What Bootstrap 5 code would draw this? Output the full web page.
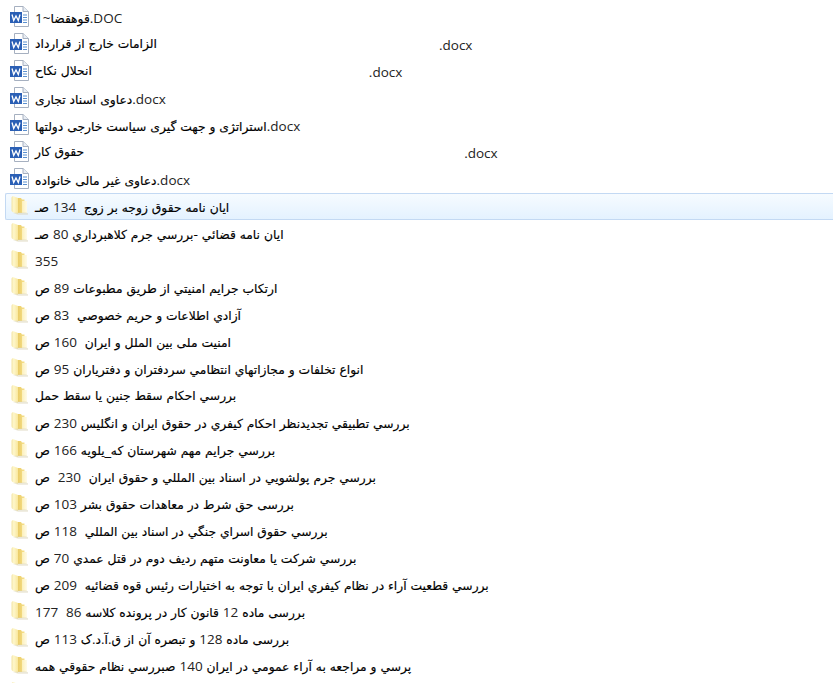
<!DOCTYPE html>
<html lang="fa">
<head>
  <meta charset="UTF-8" />
  <title>Explorer</title>
  <link rel="stylesheet" href="https://cdn.jsdelivr.net/npm/bootstrap@5.3.0/dist/css/bootstrap.min.css">
  <style>
    html, body { height: 683px; overflow: hidden; background: #fff; }
    body { font-family: "DejaVu Sans", sans-serif; font-size: 12.3px; color: #000; }
    .file-list { padding: 4px 0 0 5px; }
    .file-row { height: 27px; padding-left: 4px; gap: 6px; border: 1px solid transparent; border-right: 0; white-space: pre; direction: ltr; -webkit-text-stroke: .15px #000; }
    .file-row.is-selected { border-color: #c3d9f3; border-radius: 2px 0 0 2px; background: linear-gradient(#f6fbff, #e4f2ff); }
    .file-icon { flex: none; width: 19px; height: 21px; margin-bottom: 3px; filter: blur(.4px); }
    .file-label { padding-top: 2px; }
    .latin-run { font-family: "Open Sans", sans-serif; font-size: 13.5px; color: #222; -webkit-text-stroke: 0; }
    .pad-282 { margin-left: 282px; }
    .pad-277 { margin-left: 277px; }
    .pad-380 { margin-left: 380px; }
  </style>
</head>
<body>
  <svg class="position-absolute" width="0" height="0">
    <defs>
      <linearGradient id="leaf" x1="0" x2="1" y1="0" y2="0">
        <stop offset="0" stop-color="#f3e4a4"/><stop offset=".35" stop-color="#fef7cc"/><stop offset="1" stop-color="#f9e79c"/>
      </linearGradient>
      <linearGradient id="back" x1="0" x2="1" y1="0" y2="0">
        <stop offset="0" stop-color="#e6c65c"/><stop offset="1" stop-color="#f6e08c"/>
      </linearGradient>
      <linearGradient id="front" x1="0" x2="1" y1="0" y2="0">
        <stop offset="0" stop-color="#fcf0ba"/><stop offset="1" stop-color="#fffbe8"/>
      </linearGradient>
      <symbol id="doc" viewBox="0 0 19 21">
        <path d="M4.500.5H13L18.500 5.500V20.500H4.500z" fill="#fff" stroke="#a6b0c0"/>
        <path d="M13 .5V5.500h5.500" fill="#e8edf4" stroke="#a6b0c0"/>
        <path d="M13 9h4M13 11.500h4M13 14h4M13 16.500h4" stroke="#5b90cf"/>
        <rect x="0" y="6" width="12" height="11" fill="#2a5fb5"/>
        <path d="M2 8.500l1.700 6 2.300-4.500 2.300 4.500 1.700-6" fill="none" stroke="#fff" stroke-width="1.300"/>
      </symbol>
      <symbol id="folder" viewBox="0 0 19 21">
        <path d="M6 3h5l1 1.500h2.500V18H6z" fill="url(#back)"/>
        <path d="M12 6h5v12h-5z" fill="url(#front)"/>
        <path d="M1.500 3C1.500 1.500 2.500 1 3.500 1.300L8 3V19L3.500 17.500C2.200 17 1.500 16.200 1.500 15z" fill="url(#leaf)"/>
        <path d="M3 18l5 1.800h10v-1.600L16 17.500H8z" fill="#d8d2b4" opacity=".5"/>
      </symbol>
    </defs>
  </svg>

  <main class="file-list d-flex flex-column" id="files"></main>

  <script>
    // name, icon, extra class for the gap before the extension
    const rows = [
      ["قوهقضا~1.DOC", "doc"],
      ["الزامات خارج از قرارداد", "doc", "pad-282", ".docx"],
      ["انحلال نكاح", "doc", "pad-277", ".docx"],
      ["دعاوی اسناد تجاری.docx", "doc"],
      ["استراتژی و جهت گیری سیاست خارجی دولتها.docx", "doc"],
      ["حقوق كار", "doc", "pad-380", ".docx"],
      ["دعاوی غیر مالی خانواده.docx", "doc"],
      ["ايان نامه حقوق زوجه بر زوج  134 صـ", "folder"],
      ["ايان نامه قضائي -بررسي جرم كلاهبرداري 80 صـ", "folder"],
      ["355", "folder"],
      ["ارتكاب جرايم امنيتي از طريق مطبوعات 89 ص", "folder"],
      ["آزادي اطلاعات و حريم خصوصي  83 ص", "folder"],
      ["امنيت ملی بين الملل و ايران  160 ص", "folder"],
      ["انواع تخلفات و مجازاتهاي انتظامي سردفتران و دفترياران 95 ص", "folder"],
      ["بررسي احكام سقط جنين يا سقط حمل", "folder"],
      ["بررسي تطبيقي تجديدنظر احكام كيفري در حقوق ايران و انگليس 230 ص", "folder"],
      ["بررسي جرايم مهم شهرستان كه_يلويه 166 ص", "folder"],
      ["بررسي جرم پولشويي در اسناد بين المللي و حقوق ايران  230  ص", "folder"],
      ["بررسی حق شرط در معاهدات حقوق بشر 103 ص", "folder"],
      ["بررسي حقوق اسراي جنگي در اسناد بين المللي  118 ص", "folder"],
      ["بررسي شركت يا معاونت متهم رديف دوم در قتل عمدي 70 ص", "folder"],
      ["بررسي قطعيت آراء در نظام كيفري ايران با توجه به اختيارات رئيس قوه قضائيه  209 ص", "folder"],
      ["بررسی ماده 12 قانون كار در پرونده كلاسه 86  177", "folder"],
      ["بررسی ماده 128 و تبصره آن از ق.آ.د.ک 113 ص", "folder"],
      ["پرسي و مراجعه به آراء عمومي در ايران 140 صبررسي نظام حقوقي همه", "folder"],
      ["", "folder"]
    ];

    // digits and latin letters are set larger than the arabic
    const wrap = (s) => s.replace(/[0-9~]+|[A-Za-z.]+/g, (m) => `<span class="latin-run">${m}</span>`);

    const list = document.getElementById("files");
    rows.forEach((r, i) => {
      const row = document.createElement("div");
      row.className = "file-row d-flex align-items-center" + (i === 7 ? " is-selected" : "");
      let label = `<span>${wrap(r[0])}</span>`;
      if (r[2]) label += `<span class="${r[2]}">${wrap(r[3])}</span>`;
      row.innerHTML = `<svg class="file-icon"><use href="#${r[1]}"/></svg><div class="file-label d-flex">${label}</div>`;
      list.appendChild(row);
    });
  </script>
  <script src="https://cdn.jsdelivr.net/npm/bootstrap@5.3.0/dist/js/bootstrap.bundle.min.js"></script>
</body>
</html>
